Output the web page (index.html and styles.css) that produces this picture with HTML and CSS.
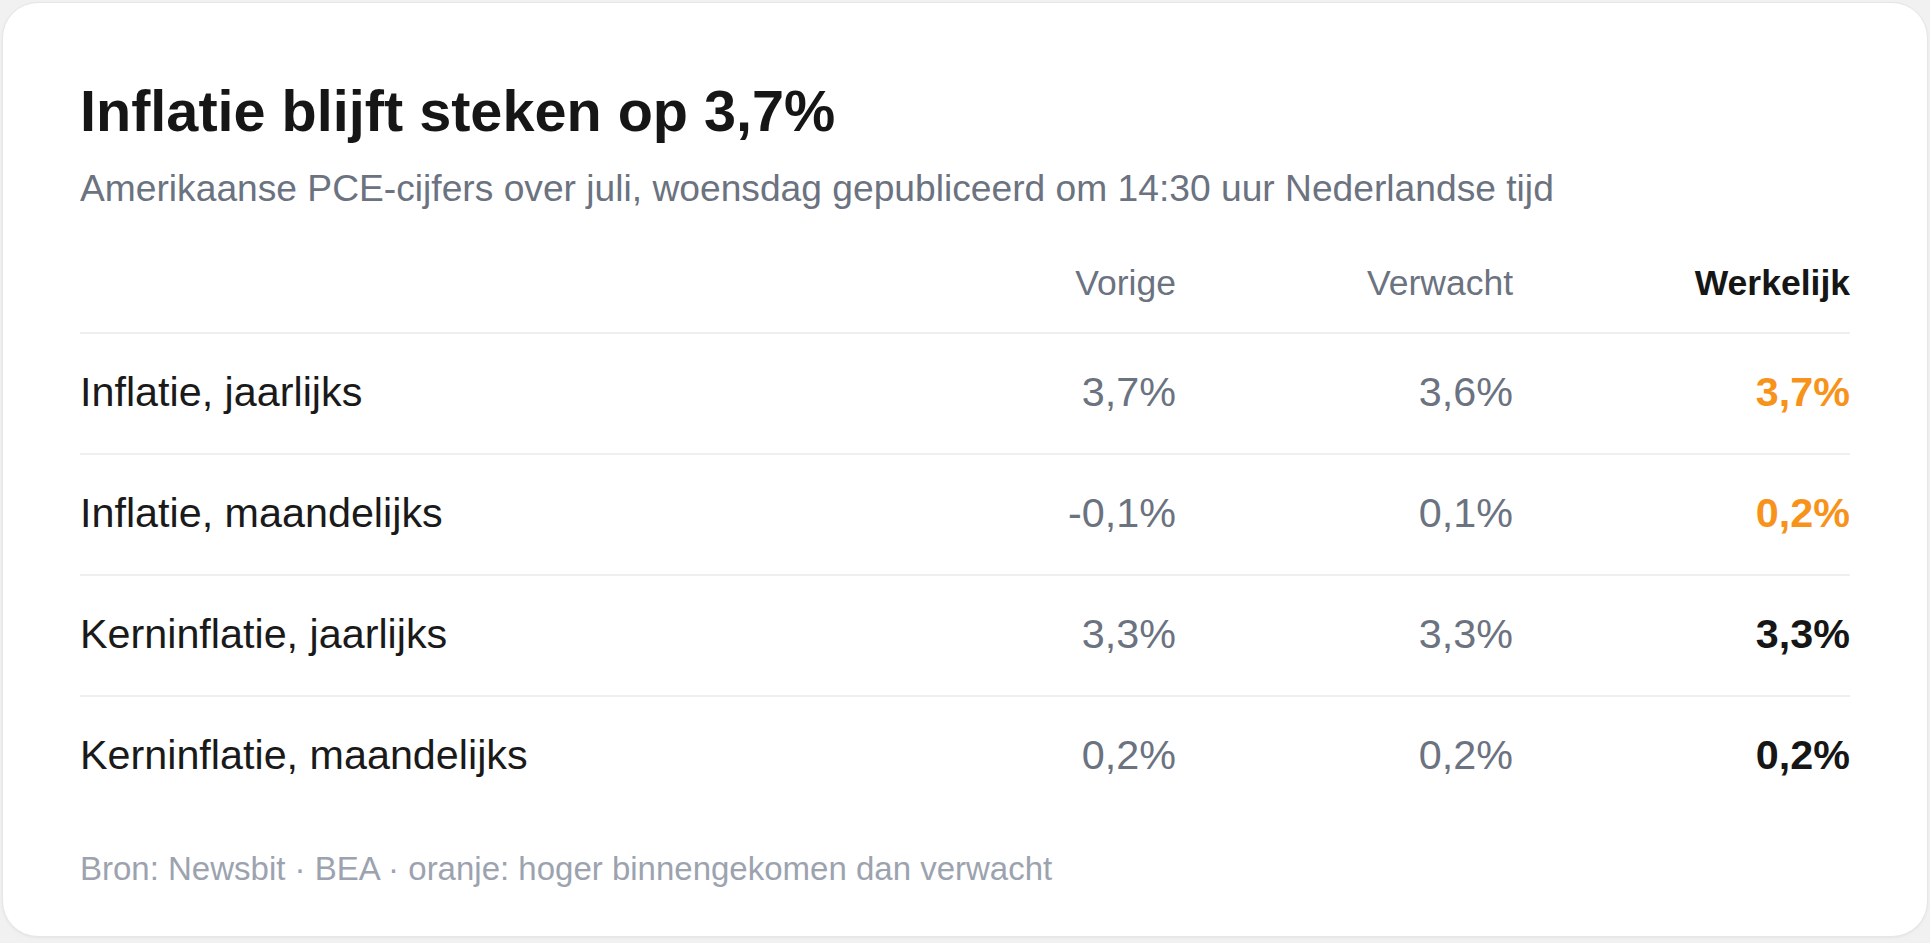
FILE: index.html
```html
<!DOCTYPE html>
<html lang="nl">
<head>
<meta charset="utf-8">
<title>Inflatie blijft steken op 3,7%</title>
<link rel="stylesheet" href="styles.css">
</head>
<body>
<main class="card">
  <h1 class="title">Inflatie blijft steken op 3,7%</h1>
  <p class="subtitle">Amerikaanse PCE-cijfers over juli, woensdag gepubliceerd om 14:30 uur Nederlandse tijd</p>
  <table class="data">
    <thead>
      <tr>
        <th class="col-label"></th>
        <th class="col-num">Vorige</th>
        <th class="col-num">Verwacht</th>
        <th class="col-num col-actual">Werkelijk</th>
      </tr>
    </thead>
    <tbody>
      <tr>
        <td class="label">Inflatie, jaarlijks</td>
        <td class="num">3,7%</td>
        <td class="num">3,6%</td>
        <td class="num actual hot">3,7%</td>
      </tr>
      <tr>
        <td class="label">Inflatie, maandelijks</td>
        <td class="num">-0,1%</td>
        <td class="num">0,1%</td>
        <td class="num actual hot">0,2%</td>
      </tr>
      <tr>
        <td class="label">Kerninflatie, jaarlijks</td>
        <td class="num">3,3%</td>
        <td class="num">3,3%</td>
        <td class="num actual">3,3%</td>
      </tr>
      <tr>
        <td class="label">Kerninflatie, maandelijks</td>
        <td class="num">0,2%</td>
        <td class="num">0,2%</td>
        <td class="num actual">0,2%</td>
      </tr>
    </tbody>
  </table>
  <p class="footer">Bron: Newsbit · BEA · oranje: hoger binnengekomen dan verwacht</p>
</main>
</body>
</html>
```

FILE: styles.css
```css
html, body {
  margin: 0;
  padding: 0;
}

body {
  background: #f1f1f1;
  padding: 2px;
  font-family: "Liberation Sans", Arial, Helvetica, sans-serif;
  color: #1a1a1a;
}

.card {
  display: block;
  background: #ffffff;
  border: 1px solid #e6e6e6;
  border-radius: 36px;
  box-shadow: 0 1px 3px rgba(0, 0, 0, 0.05);
  padding: 76px 77px 49px 77px;
}

.title {
  margin: 0;
  font-size: 57.6px;
  line-height: 64px;
  font-weight: 700;
  color: #161616;
}

.subtitle {
  margin: 24px 0 0 0;
  font-size: 37.2px;
  line-height: 42px;
  color: #6b7280;
}

.data {
  width: 100%;
  margin-top: 54px;
  border-collapse: collapse;
  table-layout: fixed;
}

.col-num {
  width: 337px;
}

.data th {
  font-size: 35.5px;
  line-height: 40px;
  font-weight: 400;
  color: #6b7280;
  padding: 0 0 29px 0;
  text-align: right;
  border-bottom: 2px solid #efeff1;
}

.data th.col-actual {
  font-weight: 700;
  color: #161616;
}

.data td {
  font-size: 41.3px;
  line-height: 47px;
  padding: 35px 0 37px 0;
  border-bottom: 2px solid #efeff1;
}

.data tbody tr:last-child td {
  border-bottom: none;
}

.label {
  text-align: left;
  color: #1a1a1a;
}

.num {
  text-align: right;
  color: #6b7280;
}

.num.actual {
  font-weight: 700;
  color: #161616;
}

.num.actual.hot {
  color: #f7931a;
}

.footer {
  margin: 34px 0 0 0;
  font-size: 33px;
  line-height: 37px;
  color: #9ca3af;
}
```
